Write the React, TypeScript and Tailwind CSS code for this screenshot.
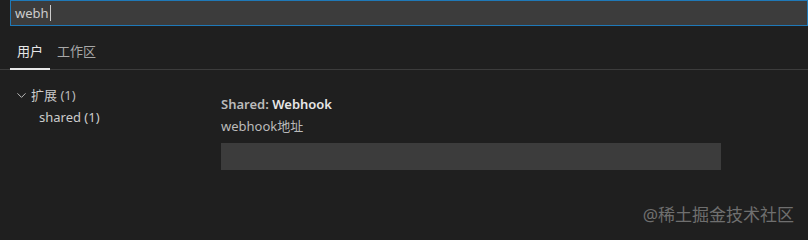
import { ChevronDown } from 'lucide-react';

export default function App() {
  return (
    <div
      className="relative w-[808px] h-[240px] overflow-hidden bg-[#1f1f1f] text-[13px] text-[#cccccc]"
      style={{ fontFamily: '"Noto Sans", "Noto Sans CJK SC", sans-serif' }}
    >
      <div className="pl-[10px]">
        <div className="h-[26px] border border-[#1f79b8] bg-[#3c3c3c] flex items-center pl-[4px]">
          <span className="text-[#cccccc] leading-none">webh</span>
          <span className="w-px h-[16px] bg-[#cccccc] ml-px" />
        </div>
      </div>

      <div className="flex items-end pl-[10px] mt-[16px] border-b border-[#3c3c3c]">
        <div className="px-[7px] pb-[6px] border-b-2 border-[#e7e7e7] -mb-px text-[#e7e7e7]">用户</div>
        <div className="px-[7px] pb-[7px] text-[#a8a8a8]">工作区</div>
      </div>

      <div className="flex">
        <div className="w-[221px] pt-[15px] pl-[14px]">
          <div className="flex items-center h-[22px]">
            <ChevronDown size={15} strokeWidth={1.5} className="text-[#c5c5c5]" />
            <span className="ml-[2px]">扩展 <span className="text-[#bbbbbb]">(1)</span></span>
          </div>
          <div className="h-[22px] flex items-center pl-[25px]">shared (1)</div>
        </div>
        <div className="pt-[24px]">
          <div className="font-semibold leading-[20px]">
            <span className="text-[#bbbbbb]">Shared: </span>
            <span className="text-[#e7e7e7]">Webhook</span>
          </div>
          <div className="leading-[20px] mt-[2px] text-[#bbbbbb]">webhook地址</div>
          <div className="mt-[7px] w-[500px] h-[27px] bg-[#3c3c3c]" />
        </div>
      </div>

      <div className="absolute right-[14px] bottom-[13px] text-[17px] text-[#6f6f6f]">@稀土掘金技术社区</div>
    </div>
  );
}
